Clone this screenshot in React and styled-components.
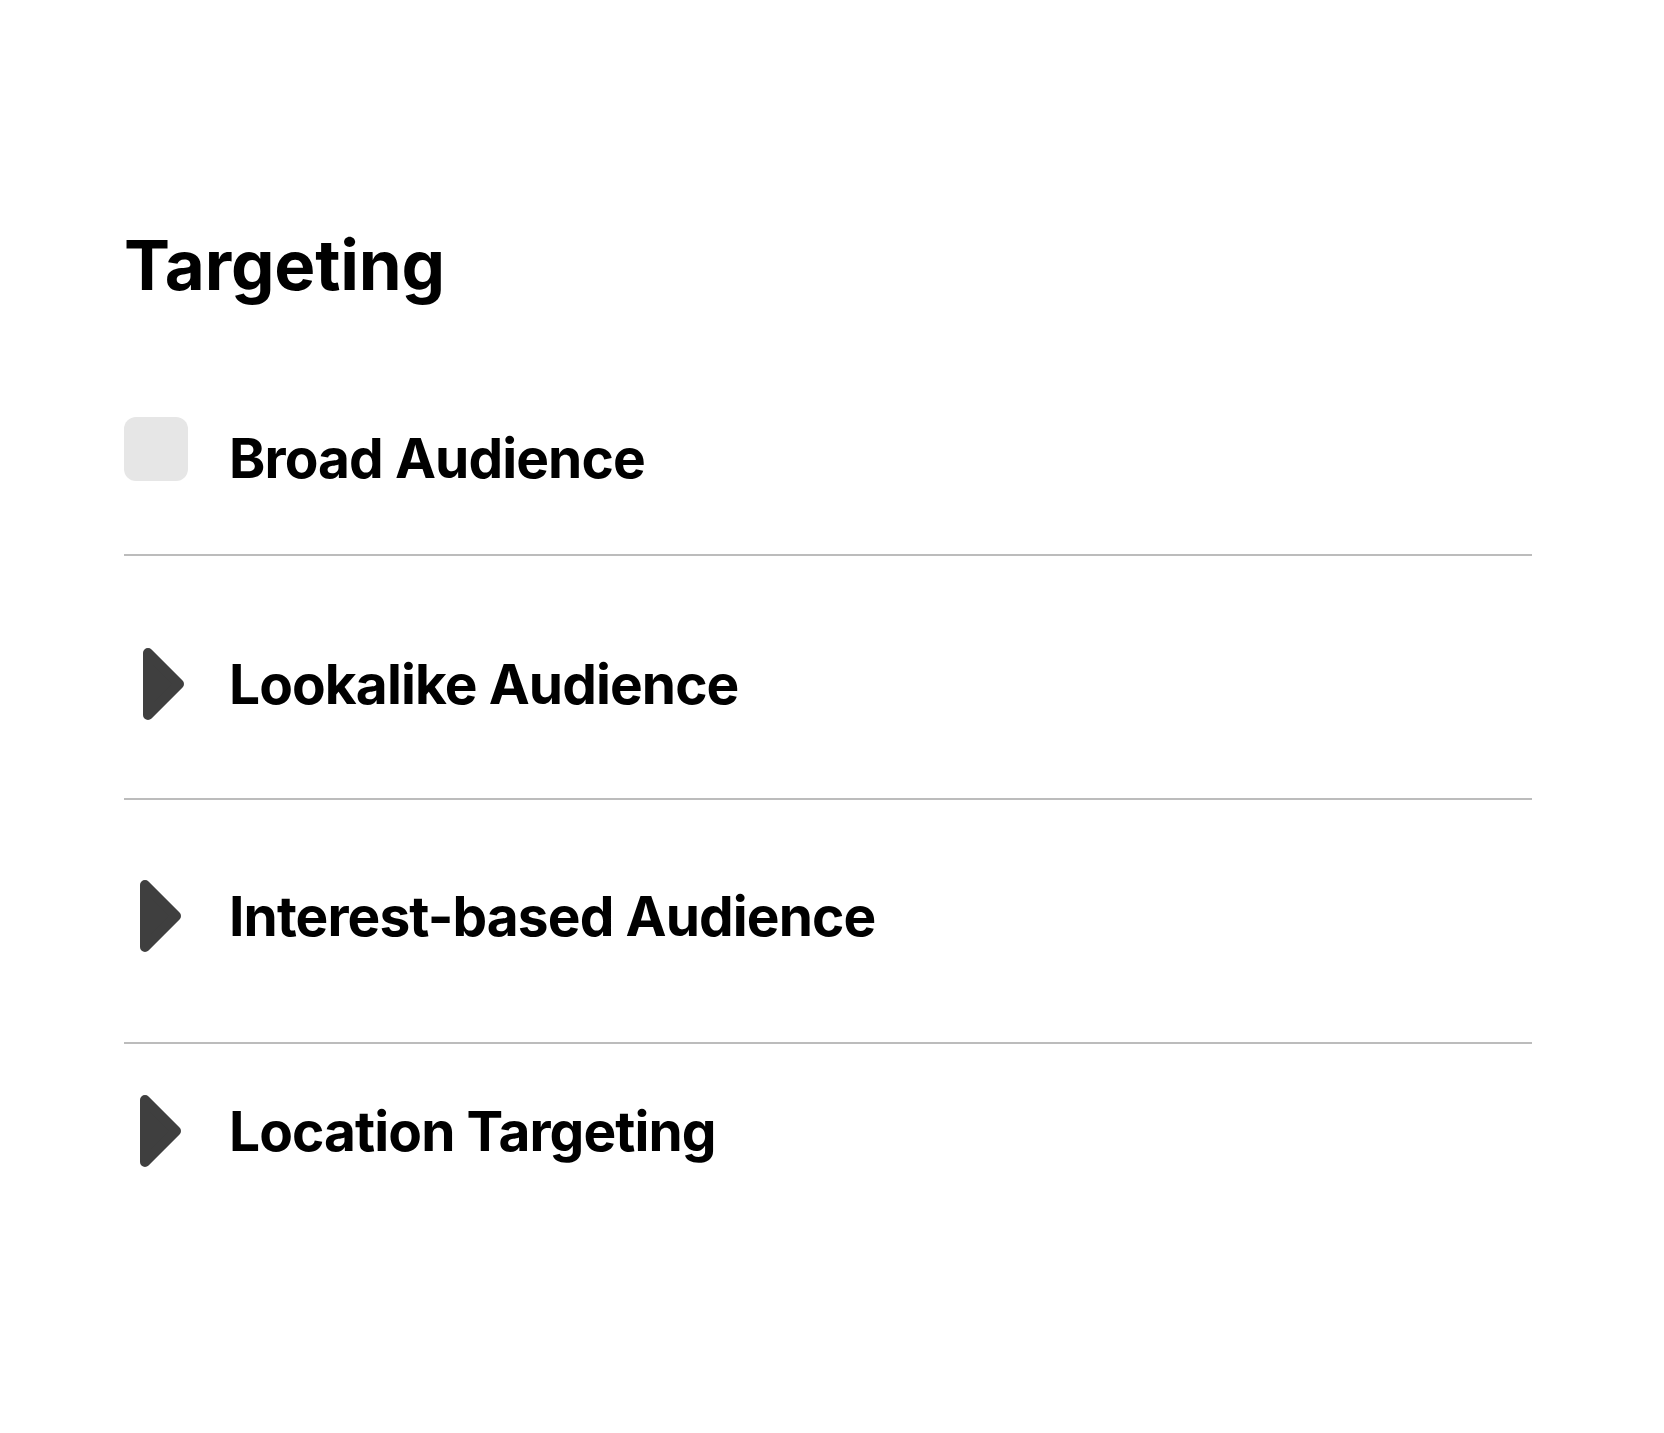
import React from "react";
import styled, { createGlobalStyle } from "styled-components";

const Global = createGlobalStyle`
  html, body { margin: 0; padding: 0; background: #ffffff; }
  body { font-family: Inter, "Noto Sans", "Liberation Sans", sans-serif; color: #000; }
`;

const Page = styled.main`
  box-sizing: border-box;
  width: 100%;
  min-height: 1433px;
  padding: 231px 132px 0 124px;
`;

const Title = styled.h1`
  margin: 0 0 117px;
  font-size: 69px;
  line-height: 1;
  font-weight: 700;
  letter-spacing: -0.2px;
  color: #000;
`;

const List = styled.section`
  display: flex;
  flex-direction: column;
`;

const Row = styled.div`
  display: grid;
  grid-template-columns: 64px 1fr;
  column-gap: 41px;
  align-items: ${(p) => p.$align || "center"};
  padding: ${(p) => p.$pt}px 0 ${(p) => p.$pb}px;
`;

const Divider = styled.hr`
  margin: 0;
  border: 0;
  height: 2px;
  background: #bcbcbc;
`;

const Checkbox = styled.span`
  display: block;
  width: 64px;
  height: 64px;
  border-radius: 12px;
  background: #e6e6e6;
`;

const ArrowWrap = styled.span`
  display: block;
  width: 44px;
  height: 74px;
  margin-left: ${(p) => p.$shift}px;
  svg { display: block; }
`;

const Label = styled.span`
  display: block;
  font-size: 55px;
  line-height: 1;
  font-weight: 700;
  letter-spacing: -0.9px;
  color: #000;
  margin-top: ${(p) => p.$mt || 0}px;
`;

function Arrow({ shift }) {
  return (
    <ArrowWrap $shift={shift}>
      <svg width="44" height="74" viewBox="0 0 44 74">
        <path
          d="M6 6 L37 37 L6 68 Z"
          fill="#3f3f3f"
          stroke="#3f3f3f"
          strokeWidth="10"
          strokeLinejoin="round"
        />
      </svg>
    </ArrowWrap>
  );
}

const items = [
  { label: "Lookalike Audience", pt: 91, pb: 77, shift: 18 },
  { label: "Interest-based Audience", pt: 79, pb: 89, shift: 15 },
  { label: "Location Targeting", pt: 50, pb: 0, shift: 15 },
];

export default function App() {
  return (
    <>
      <Global />
      <Page>
        <Title>Targeting</Title>
        <List>
          <Row $pt={0} $pb={68} $align="start">
            <Checkbox />
            <Label $mt={14}>Broad Audience</Label>
          </Row>
          {items.map((it) => (
            <React.Fragment key={it.label}>
              <Divider />
              <Row $pt={it.pt} $pb={it.pb}>
                <Arrow shift={it.shift} />
                <Label>{it.label}</Label>
              </Row>
            </React.Fragment>
          ))}
        </List>
      </Page>
    </>
  );
}
